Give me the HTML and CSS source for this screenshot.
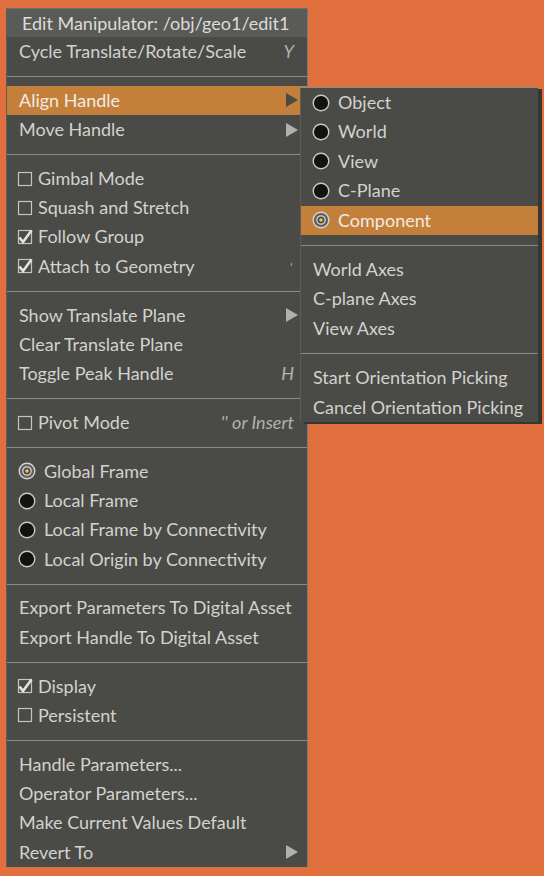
FILE: index.html
```html
<!DOCTYPE html>
<html>
<head>
<meta charset="utf-8">
<link rel="stylesheet" href="styles.css">
</head>
<body>
<svg width="0" height="0" class="defs">
  <defs>
    <symbol id="cb" viewBox="0 0 16 16"><rect x="1.5" y="1.5" width="13" height="13" fill="none" stroke="#c4c4c0" stroke-width="1.2"/></symbol>
    <symbol id="cbc" viewBox="0 0 16 16"><rect x="1.5" y="1.5" width="13" height="13" fill="none" stroke="#c4c4c0" stroke-width="1.2"/><path d="M2.5 8.5 L6 13 L14.5 1.5" fill="none" stroke="#e2e2de" stroke-width="2.6" stroke-linejoin="miter"/></symbol>
    <symbol id="rd" viewBox="0 0 18 18"><circle cx="9" cy="9" r="7.8" fill="#121212" stroke="#c8c8c4" stroke-width="1.4"/></symbol>
    <symbol id="rds" viewBox="0 0 18 18"><circle cx="9" cy="9" r="7.8" fill="#5e5e5a" stroke="#d4d4d0" stroke-width="1.4"/><circle cx="9" cy="9" r="4.2" fill="#4a4a46" stroke="#d8d8d4" stroke-width="1.3"/><circle cx="9" cy="9" r="1.8" fill="#f2c24a"/></symbol>
    <symbol id="ar" viewBox="0 0 12 14"><polygon points="0,0 12,7 0,14"/></symbol>
  </defs>
</svg>
<div class="menu">
  <div class="title">Edit Manipulator: /obj/geo1/edit1</div>
  <div class="row"><span class="lbl">Cycle Translate/Rotate/Scale</span><span class="key">Y</span></div>
  <div class="sep"></div>
  <div class="row hl"><span class="lbl">Align Handle</span><svg class="arrow dark"><use href="#ar"/></svg></div>
  <div class="row"><span class="lbl">Move Handle</span><svg class="arrow"><use href="#ar"/></svg></div>
  <div class="sep"></div>
  <div class="row chk"><svg class="box"><use href="#cb"/></svg><span class="lbl">Gimbal Mode</span></div>
  <div class="row chk"><svg class="box"><use href="#cb"/></svg><span class="lbl">Squash and Stretch</span></div>
  <div class="row chk"><svg class="box"><use href="#cbc"/></svg><span class="lbl">Follow Group</span></div>
  <div class="row chk"><svg class="box"><use href="#cbc"/></svg><span class="lbl">Attach to Geometry</span><span class="key tick">'</span></div>
  <div class="sep"></div>
  <div class="row"><span class="lbl">Show Translate Plane</span><svg class="arrow"><use href="#ar"/></svg></div>
  <div class="row"><span class="lbl">Clear Translate Plane</span></div>
  <div class="row"><span class="lbl">Toggle Peak Handle</span><span class="key">H</span></div>
  <div class="sep"></div>
  <div class="row chk"><svg class="box"><use href="#cb"/></svg><span class="lbl">Pivot Mode</span><span class="key">'' or Insert</span></div>
  <div class="sep"></div>
  <div class="row rad"><svg class="radio"><use href="#rds"/></svg><span class="lbl">Global Frame</span></div>
  <div class="row rad"><svg class="radio"><use href="#rd"/></svg><span class="lbl">Local Frame</span></div>
  <div class="row rad"><svg class="radio"><use href="#rd"/></svg><span class="lbl">Local Frame by Connectivity</span></div>
  <div class="row rad"><svg class="radio"><use href="#rd"/></svg><span class="lbl">Local Origin by Connectivity</span></div>
  <div class="sep"></div>
  <div class="row"><span class="lbl">Export Parameters To Digital Asset</span></div>
  <div class="row"><span class="lbl">Export Handle To Digital Asset</span></div>
  <div class="sep"></div>
  <div class="row chk"><svg class="box"><use href="#cbc"/></svg><span class="lbl">Display</span></div>
  <div class="row chk"><svg class="box"><use href="#cb"/></svg><span class="lbl">Persistent</span></div>
  <div class="sep"></div>
  <div class="row"><span class="lbl">Handle Parameters...</span></div>
  <div class="row"><span class="lbl">Operator Parameters...</span></div>
  <div class="row"><span class="lbl">Make Current Values Default</span></div>
  <div class="row"><span class="lbl">Revert To</span><svg class="arrow"><use href="#ar"/></svg></div>

  <div class="submenu">
    <div class="row rad"><svg class="radio"><use href="#rd"/></svg><span class="lbl">Object</span></div>
    <div class="row rad"><svg class="radio"><use href="#rd"/></svg><span class="lbl">World</span></div>
    <div class="row rad"><svg class="radio"><use href="#rd"/></svg><span class="lbl">View</span></div>
    <div class="row rad"><svg class="radio"><use href="#rd"/></svg><span class="lbl">C-Plane</span></div>
    <div class="row rad hl"><svg class="radio"><use href="#rds"/></svg><span class="lbl">Component</span></div>
    <div class="sep"></div>
    <div class="row"><span class="lbl">World Axes</span></div>
    <div class="row"><span class="lbl">C-plane Axes</span></div>
    <div class="row"><span class="lbl">View Axes</span></div>
    <div class="sep"></div>
    <div class="row"><span class="lbl">Start Orientation Picking</span></div>
    <div class="row"><span class="lbl">Cancel Orientation Picking</span></div>
  </div>
</div>
</body>
</html>
```
FILE: styles.css
```css
html, body {
  margin: 0;
  padding: 0;
}
body {
  background: #e2703f;
  width: 544px;
  height: 876px;
  overflow: hidden;
  font-family: Lato, "Open Sans", sans-serif;
  font-size: 18px;
  color: #d2d2ce;
}
.defs {
  position: absolute;
}
.menu {
  position: relative;
  margin: 8px 0 0 6px;
  width: 300px;
  background: #4a4a47;
  border: 1px solid #5c5c59;
  border-top-color: #6e6e6b;
  border-right-color: #7a7a76;
  border-bottom: none;
  box-sizing: content-box;
}
.title {
  height: 28px;
  line-height: 28px;
  background: #5a5a57;
  padding-left: 15px;
  color: #dcdcd8;
  white-space: nowrap;
}
.row {
  display: flex;
  align-items: center;
  height: 29.3px;
  line-height: 29.3px;
  padding: 0 13px 0 12px;
  white-space: nowrap;
}
.row.hl {
  background: #c4803a;
  color: #f0ebe2;
}
.lbl {
  flex: 1;
}
.key {
  font-style: italic;
  color: #b2b2ae;
}
.key.tick {
  font-size: 12px;
  padding-right: 2px;
}
.sep {
  height: 1px;
  background: #8a8a86;
  margin: 10px 0 8.5px;
}
.arrow {
  width: 12px;
  height: 14px;
  fill: #b0b0ac;
  margin-right: -4px;
}
.arrow.dark {
  fill: #4a4a47;
}
.row.chk {
  padding-left: 10px;
}
.box {
  width: 16px;
  height: 16px;
  margin-right: 5px;
}
.row.rad {
  padding-left: 11px;
}
.radio {
  width: 18px;
  height: 18px;
  margin-right: 8px;
}
.submenu {
  position: absolute;
  left: 293px;
  top: 78px;
  width: 237px;
  background: #4a4a47;
  border-top: 1px solid #8e8e8a;
  border-left: 1px solid #5c5c59;
  box-shadow: 4px 2px 0 #363634;
}
.submenu .row {
  height: 29.4px;
  line-height: 29.4px;
}
.submenu .sep {
  margin: 10px 0 9px;
}
```
